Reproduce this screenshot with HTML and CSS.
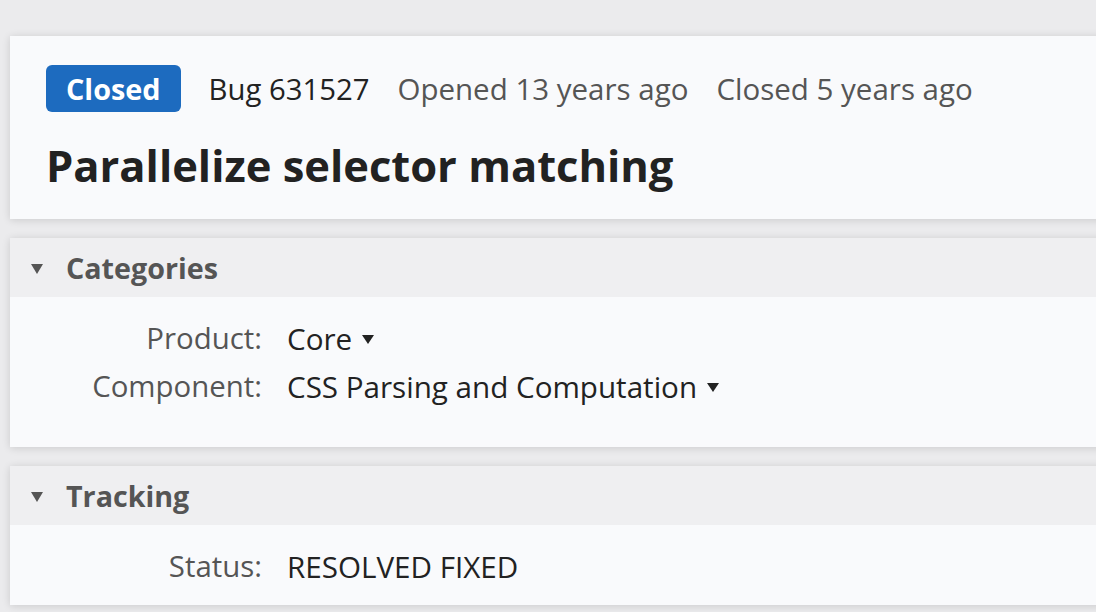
FILE: index.html
```html
<!DOCTYPE html>
<html>
<head>
<meta charset="utf-8">
<link rel="stylesheet" href="styles.css">
</head>
<body>
<div class="page">
  <section class="card summary">
    <div class="meta">
      <span class="badge">Closed</span>
      <span class="bugid">Bug 631527</span>
      <span class="when">Opened 13 years ago</span>
      <span class="when">Closed 5 years ago</span>
    </div>
    <h1 class="title">Parallelize selector matching</h1>
  </section>

  <section class="card module">
    <header class="module-head">
      <span class="twisty"></span>
      <h2 class="module-title">Categories</h2>
    </header>
    <div class="module-body cats">
      <div class="field">
        <span class="label">Product:</span>
        <span class="value">Core <span class="caret"></span></span>
      </div>
      <div class="field">
        <span class="label">Component:</span>
        <span class="value">CSS Parsing and Computation <span class="caret"></span></span>
      </div>
    </div>
  </section>

  <section class="card module">
    <header class="module-head">
      <span class="twisty"></span>
      <h2 class="module-title">Tracking</h2>
    </header>
    <div class="module-body tracking">
      <div class="field">
        <span class="label">Status:</span>
        <span class="value upper">RESOLVED FIXED</span>
      </div>
    </div>
  </section>
</div>
</body>
</html>
```
FILE: styles.css
```css
html, body {
  margin: 0;
  padding: 0;
}
body {
  background: #ebebed;
  font-family: "Open Sans", "Noto Sans", sans-serif;
  color: #222;
  overflow: hidden;
  width: 1096px;
  height: 612px;
}
.page {
  padding: 36px 0 0 10px;
  display: flex;
  flex-direction: column;
  gap: 19px;
}
.card {
  width: 1120px;
  background: #f9fafc;
  box-shadow: 0 1px 8px rgba(0, 0, 0, 0.14);
}
.summary {
  padding: 29px 36px 22px 36px;
  box-sizing: border-box;
  height: 183px;
}
.meta {
  display: flex;
  align-items: center;
  height: 47px;
  gap: 28px;
}
.badge {
  background: #1d6bbf;
  color: #fff;
  font-weight: 700;
  font-size: 28.8px;
  border-radius: 6px;
  height: 47px;
  padding: 0 20px;
  display: flex;
  align-items: center;
  box-sizing: border-box;
}
.bugid {
  font-size: 29.3px;
  color: #222;
}
.when {
  font-size: 29.5px;
  color: #555;
}
.title {
  margin: 26px 0 0 0;
  font-size: 43.5px;
  font-weight: 700;
  color: #222;
  line-height: 56px;
}
.module-head {
  height: 59px;
  background: #efeff1;
  display: flex;
  align-items: center;
  padding-left: 21px;
}
.twisty {
  width: 0;
  height: 0;
  border-left: 6px solid transparent;
  border-right: 6px solid transparent;
  border-top: 10px solid #555;
  margin-right: 23px;
  margin-top: 2px;
}
.module-title {
  margin: 0;
  font-size: 28.7px;
  font-weight: 700;
  color: #555;
}
.module-body {
  padding: 17px 0 0 0;
  box-sizing: border-box;
}
.cats {
  height: 150px;
}
.tracking {
  height: 80px;
  padding-top: 17px;
}
.field {
  display: flex;
  align-items: center;
  height: 48px;
}
.label {
  width: 252px;
  flex: none;
  text-align: right;
  font-size: 29.4px;
  color: #555;
}
.value {
  margin-left: 25px;
  font-size: 29.6px;
  color: #222;
  display: flex;
  align-items: center;
  gap: 10px;
}
.caret {
  width: 0;
  height: 0;
  border-left: 6px solid transparent;
  border-right: 6px solid transparent;
  border-top: 9px solid #222;
  margin-top: 3px;
}
```
